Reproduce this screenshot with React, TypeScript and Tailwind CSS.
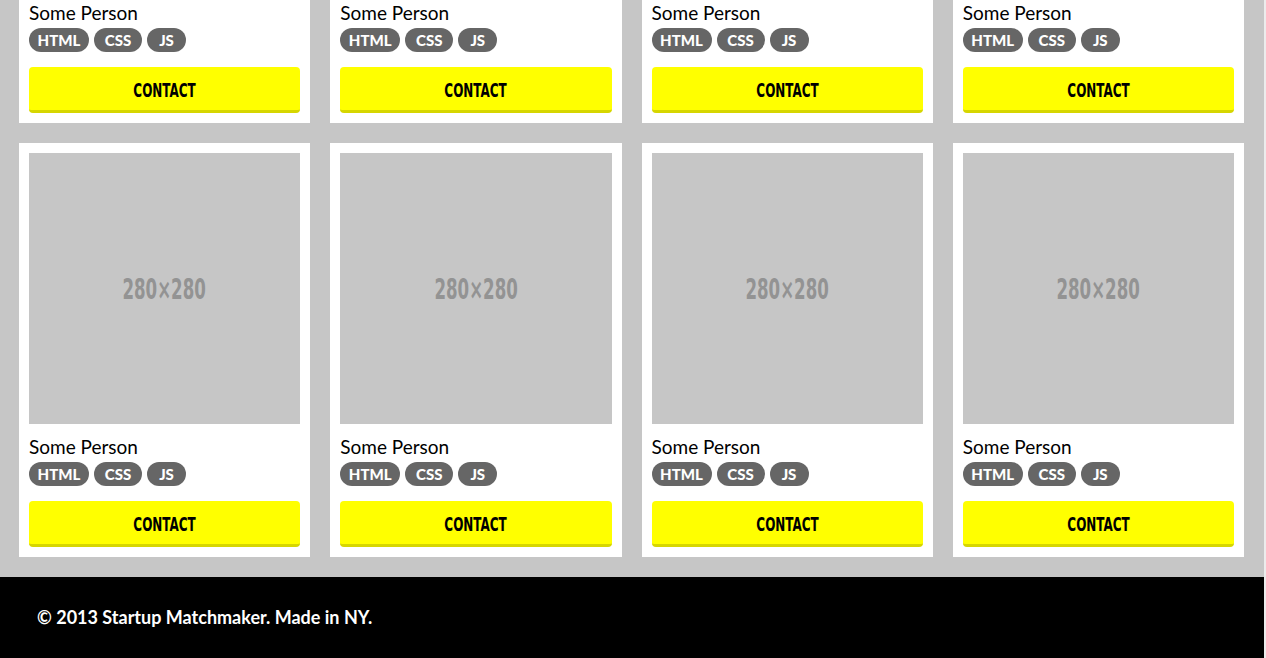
import React from "react";

const people = Array.from({ length: 8 }, () => ({
  name: "Some Person",
  skills: ["HTML", "CSS", "JS"],
}));

// pill widths as measured on the original page
const pillWidth: Record<string, string> = {
  HTML: "w-[60px]",
  CSS: "w-[48px]",
  JS: "w-[39px]",
};

function PersonCard({ name, skills }: { name: string; skills: string[] }) {
  return (
    <div className="bg-white p-[10px] flex flex-col">
      {/* placeholder image */}
      <div className="h-[271px] w-full bg-[#c6c6c6] flex items-center justify-center">
        <span className="inline-block pt-[2px] scale-x-[0.66] text-[28px] font-bold leading-none text-[#939393] font-['DejaVu_Sans_Condensed','DejaVu_Sans',sans-serif]">
          280×280
        </span>
      </div>

      <div className="mt-[11px] text-[19px] leading-[24px] text-black font-['Lato',sans-serif]">
        {name}
      </div>

      <div className="mt-[3px] flex gap-[5px]">
        {skills.map((s) => (
          <span
            key={s}
            className={`${pillWidth[s]} h-[24px] rounded-full bg-[#666666] text-center text-white text-[15px] font-black leading-[24px] font-['Lato',sans-serif]`}
          >
            {s}
          </span>
        ))}
      </div>

      <button className="mt-[15px] h-[46px] w-full rounded-[4px] bg-[#ffff00] border-b-[3px] border-[#d6d600] flex items-center justify-center">
        <span className="inline-block pt-[3px] scale-x-[0.7] text-[19px] font-bold text-black font-['DejaVu_Sans_Condensed','DejaVu_Sans',sans-serif]">
          CONTACT
        </span>
      </button>
    </div>
  );
}

export default function App() {
  return (
    <div className="flex h-[658px] overflow-hidden bg-[#c6c6c6]">
      <div className="flex-1 flex flex-col">
        <main className="mt-[-291px] pl-[19px] pr-[20px] pb-[20px] grid grid-cols-4 gap-[20px]">
          {people.map((p, i) => (
            <PersonCard key={i} name={p.name} skills={p.skills} />
          ))}
        </main>

        <footer className="h-[81px] shrink-0 bg-black px-[37px] flex items-center">
          <p className="text-white text-[18px] font-bold font-['Lato',sans-serif]">
            © 2013 Startup Matchmaker. Made in NY.
          </p>
        </footer>
      </div>
      <div className="w-[2px] bg-[#ececec]" />
    </div>
  );
}
